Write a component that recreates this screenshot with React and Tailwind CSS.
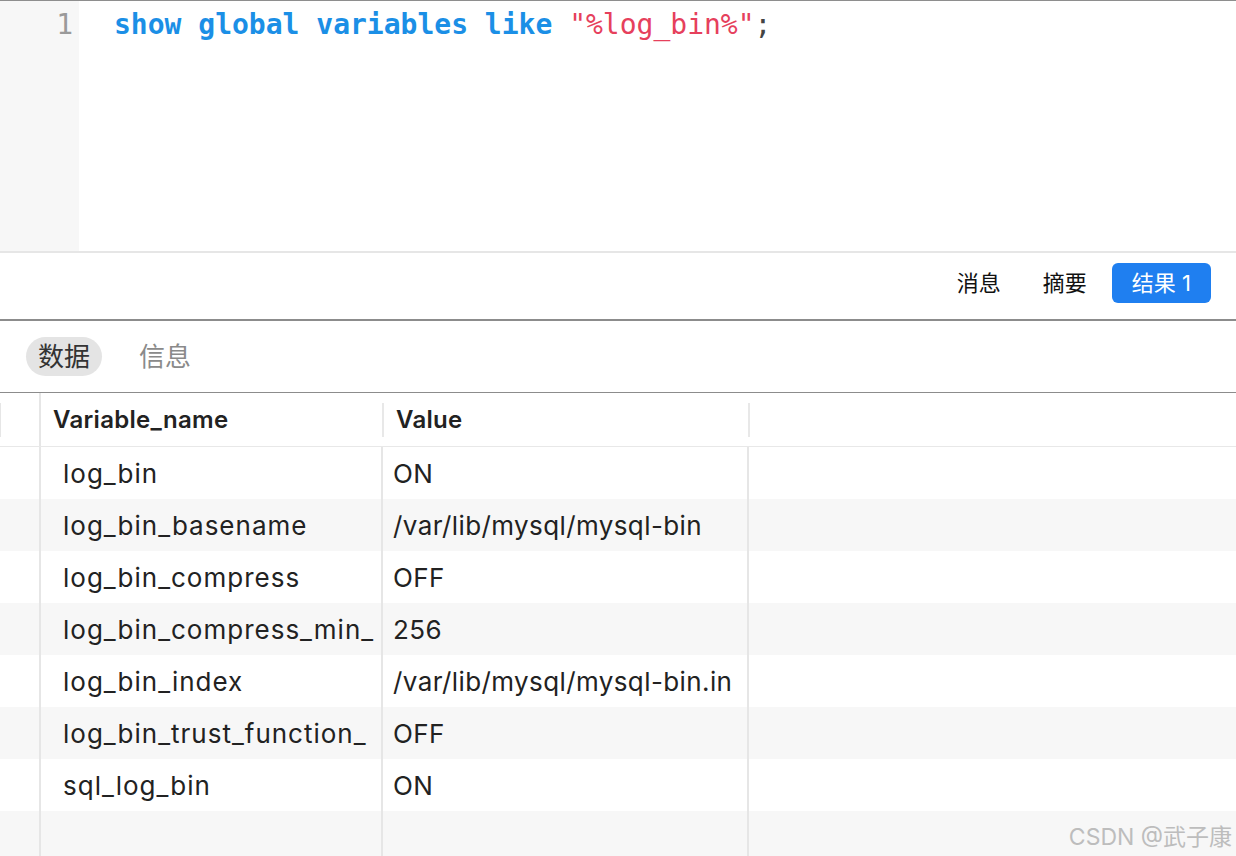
import React from "react"

const rows = [
  ["log_bin", "ON"],
  ["log_bin_basename", "/var/lib/mysql/mysql-bin"],
  ["log_bin_compress", "OFF"],
  ["log_bin_compress_min_", "256"],
  ["log_bin_index", "/var/lib/mysql/mysql-bin.in"],
  ["log_bin_trust_function_", "OFF"],
  ["sql_log_bin", "ON"],
  ["", ""],
]

const mono = { fontFamily: '"DejaVu Sans Mono", "Liberation Mono", monospace' }

function Cell({ w, children, className = "" }) {
  return (
    <div className={`${w} shrink-0 overflow-hidden whitespace-nowrap ${className}`}>{children}</div>
  )
}

export default function App() {
  return (
    <div
      className="w-[1236px] h-[856px] overflow-hidden bg-white text-[#222]"
      style={{ fontFamily: 'Inter, "Noto Sans CJK SC", sans-serif' }}
    >
      {/* Editor */}
      <div className="h-[251px] flex border-t border-[#8e8e8e]">
        <div className="w-[79px] bg-[#f7f7f7] pt-[4px] pr-[6px] text-right text-[28px] leading-[40px] text-[#9a9a9a]" style={mono}>
          1
        </div>
        <div className="pl-[35px] pt-[4px] text-[28px] leading-[40px] whitespace-pre" style={mono}>
          <span className="font-bold text-[#1b8fe6]">show global variables like </span>
          <span className="text-[#e6405c]">"%log_bin%"</span>
          <span className="text-[#444]">;</span>
        </div>
      </div>

      {/* Result toolbar */}
      <div className="h-[70px] flex items-center justify-end pr-[25px] pb-[6px] border-t-2 border-[#e6e6e6] border-b-2 border-b-[#8c8c8c]">
        <button className="h-[40px] text-[22px] text-[#111] mr-[42px]">消息</button>
        <button className="h-[40px] text-[22px] text-[#111] mr-[25px]">摘要</button>
        <button className="px-[20px] h-[40px] rounded-[6px] bg-[#1f7ff0] text-white text-[22px]">结果 1</button>
      </div>

      {/* Tabs */}
      <div className="h-[72px] flex items-center gap-[37px] pl-[26px] border-b border-[#8c8c8c]">
        <div className="h-[39px] px-[12px] flex items-center rounded-full bg-[#e4e4e4] text-[26px] text-[#333]">数据</div>
        <div className="text-[26px] text-[#8a8a8a]">信息</div>
      </div>

      {/* Table header */}
      <div className="h-[54px] flex border-b border-[#e8e8e8] text-[24px] font-semibold tracking-[0.3px] text-[#222]">
        <div className="w-[41px] shrink-0 border-r-2 border-[#e6e6e6] flex items-center">
          <div className="w-px h-[34px] bg-[#e6e6e6]" />
        </div>
        <Cell w="w-[341px]" className="flex items-center pl-[12px] h-full">
          Variable_name
        </Cell>
        <div className="w-[2px] h-[34px] self-center bg-[#e8e8e8]" />
        <Cell w="w-[364px]" className="flex items-center pl-[12px] h-full">
          Value
        </Cell>
        <div className="w-[2px] h-[34px] self-center bg-[#e8e8e8]" />
        <div className="flex-1" />
      </div>

      {/* Table body */}
      <div className="text-[26px] text-[#222]">
        {rows.map(([name, value], i) => (
          <div key={i} className={`h-[52px] flex ${i % 2 === 1 ? "bg-[#f7f7f7]" : "bg-white"}`}>
            <div className="w-[41px] shrink-0 border-r-2 border-[#e6e6e6]" />
            <Cell w="w-[340px]" className="flex items-center pl-[22px] tracking-[1px]">{name}</Cell>
            <div className="w-[2px] bg-[#e6e6e6]" />
            <Cell w="w-[364px]" className="flex items-center pl-[10px] tracking-[0.4px]">{value}</Cell>
            <div className="w-[2px] bg-[#e6e6e6]" />
            <div className="flex-1 flex items-end justify-end pr-[4px] pb-[9px]">
              {i === rows.length - 1 && (
                <span className="text-[23px] text-[#bdbdbd]">CSDN @武子康</span>
              )}
            </div>
          </div>
        ))}
      </div>
    </div>
  )
}
